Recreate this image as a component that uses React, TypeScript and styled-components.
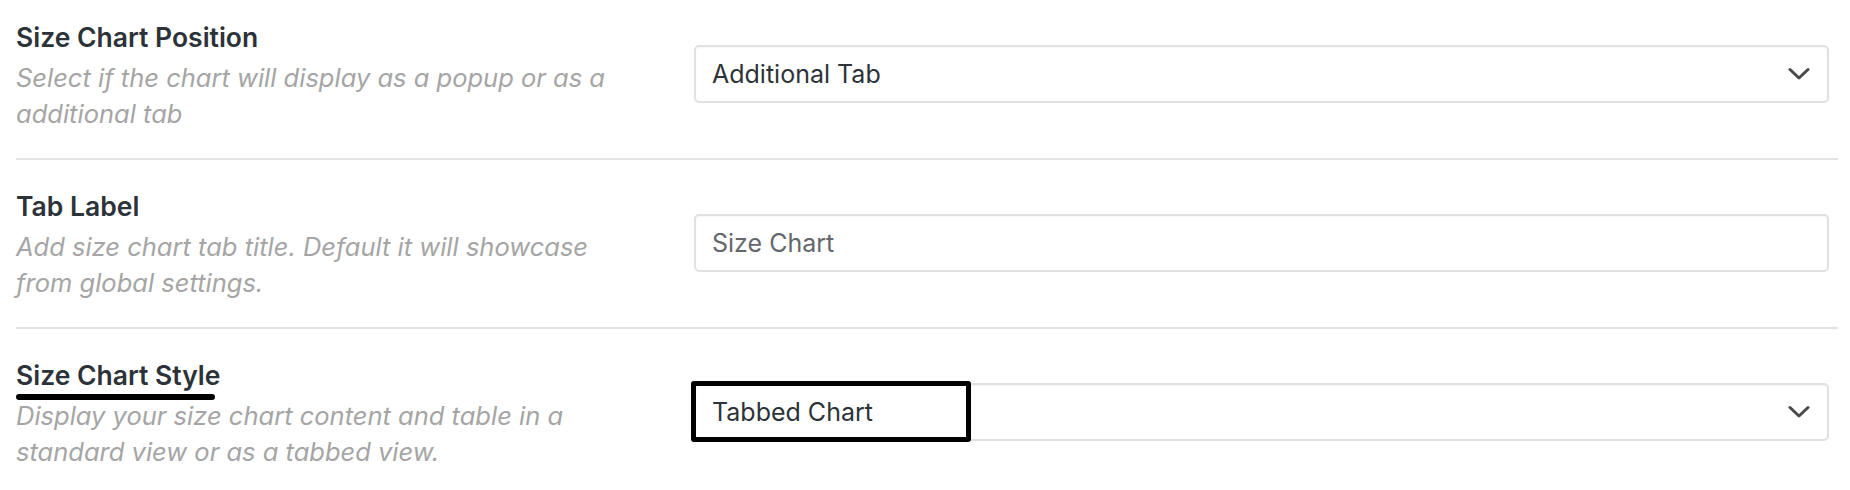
import React from "react";
import styled, { createGlobalStyle } from "styled-components";

const Global = createGlobalStyle`
  html, body { margin: 0; padding: 0; background: #ffffff; }
  body { width: 1850px; height: 490px; overflow: hidden; font-family: Inter, "Noto Sans", "Liberation Sans", Arial, sans-serif; }
  * { box-sizing: border-box; }
`;

const Page = styled.div`
  margin-top: -9px;
  padding: 0 12px 0 16px;
`;

const Row = styled.div<{ $last?: boolean }>`
  display: grid;
  grid-template-columns: 678px 1fr;
  align-items: start;
  padding: 30px 0 26px;
  border-bottom: ${(p) => (p.$last ? "none" : "2px solid #e3e3e3")};
`;

const LabelCol = styled.div`
  display: flex;
  flex-direction: column;
  gap: 7px;
`;

const Title = styled.div`
  font-size: 26.5px;
  line-height: 32px;
  font-weight: 600;
  color: #2c3338;
`;

const Marked = styled.span`
  position: relative;
  display: inline-block;
`;

const Underline = styled.span`
  position: absolute;
  left: 0;
  right: 5px;
  bottom: -9px;
  height: 6px;
  border-radius: 3px;
  background: #000;
`;

const Desc = styled.div`
  font-size: 25.5px;
  line-height: 36px;
  font-style: italic;
  color: #a5a5a5;
  max-width: 605px;
`;

const Field = styled.div`
  position: relative;
  margin-top: 24px;
  padding-right: 9px;
`;

const Box = styled.div<{ $muted?: boolean }>`
  height: 58px;
  display: flex;
  align-items: center;
  justify-content: space-between;
  padding: 0 17px 0 16px;
  border: 2px solid #e1e1e1;
  border-radius: 5px;
  background: #fff;
  box-shadow: inset 0 1px 2px rgba(0, 0, 0, 0.04);
  font-size: 25px;
  color: ${(p) => (p.$muted ? "#63676c" : "#2c3338")};
`;

const Highlight = styled.div`
  position: absolute;
  left: -3px;
  top: -2px;
  width: 280px;
  height: 61px;
  border: 5px solid #000;
  border-radius: 3px;
  pointer-events: none;
`;

const Chevron = () => (
  <svg width="22" height="14" viewBox="0 0 22 14" aria-hidden="true">
    <path d="M2 2.5 L11 11 L20 2.5" fill="none" stroke="#4a4a4a" strokeWidth="3" strokeLinecap="round" strokeLinejoin="round" />
  </svg>
);

export default function App() {
  return (
    <>
      <Global />
      <Page>
        <Row>
          <LabelCol>
            <Title>Size Chart Position</Title>
            <Desc>Select if the chart will display as a popup or as a additional tab</Desc>
          </LabelCol>
          <Field>
            <Box>
              <span>Additional Tab</span>
              <Chevron />
            </Box>
          </Field>
        </Row>
        <Row>
          <LabelCol>
            <Title>Tab Label</Title>
            <Desc>Add size chart tab title. Default it will showcase from global settings.</Desc>
          </LabelCol>
          <Field>
            <Box $muted>
              <span>Size Chart</span>
            </Box>
          </Field>
        </Row>
        <Row $last>
          <LabelCol>
            <Title>
              <Marked>
                Size Chart Style
                <Underline />
              </Marked>
            </Title>
            <Desc>Display your size chart content and table in a standard view or as a tabbed view.</Desc>
          </LabelCol>
          <Field>
            <Box>
              <span>Tabbed Chart</span>
              <Chevron />
            </Box>
            <Highlight />
          </Field>
        </Row>
      </Page>
    </>
  );
}
